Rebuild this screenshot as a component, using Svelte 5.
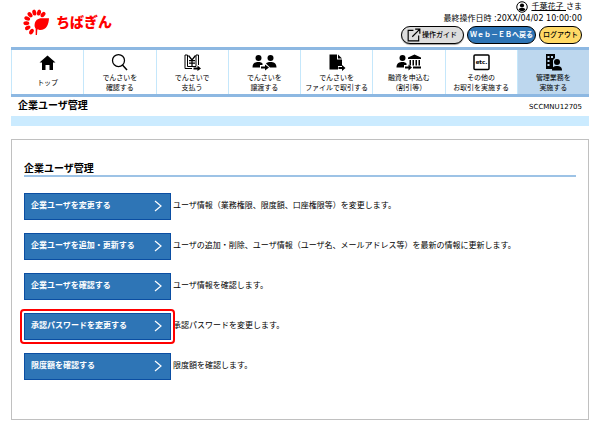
<script>
    const userName = "千葉花子";
    const lastOperation = "20XX/04/02 10:00:00";
    const screenId = "SCCMNU12705";

    const navItems = [
        { icon: "home", lines: ["トップ"] },
        { icon: "search", lines: ["でんさいを", "確認する"] },
        { icon: "pay", lines: ["でんさいで", "支払う"] },
        { icon: "transfer", lines: ["でんさいを", "譲渡する"] },
        { icon: "file", lines: ["でんさいを", "ファイルで取引する"] },
        { icon: "loan", lines: ["融資を申込む", "（割引等）"] },
        { icon: "etc", lines: ["その他の", "お取引を実施する"] },
        { icon: "admin", lines: ["管理業務を", "実施する"] },
    ];

    const menuItems = [
        { label: "企業ユーザを変更する", text: "ユーザ情報（業務権限、限度額、口座権限等）を変更します。" },
        { label: "企業ユーザを追加・更新する", text: "ユーザの追加・削除、ユーザ情報（ユーザ名、メールアドレス等）を最新の情報に更新します。" },
        { label: "企業ユーザを確認する", text: "ユーザ情報を確認します。" },
        { label: "承認パスワードを変更する", text: "承認パスワードを変更します。" },
        { label: "限度額を確認する", text: "限度額を確認します。" },
    ];

    const petals = [38, 13, -13, -40, -66, -93, -120, -150];

    let current = $state(7);
    let marked = $state(3);
</script>

<div class="page">
    <header class="header">
        <a class="logo" href="#top">
            <svg viewBox="0 0 78 78" width="26" height="26" aria-hidden="true">
                {#each petals as angle}
                    <ellipse cx="41" cy="10" rx="6" ry="9" transform="rotate({angle} 41 41)" />
                {/each}
                <path d="M35 46C36 34 46 27 58 28L78 28C77 48 70 64 50 63C47 63 44 62 43 61L42 78H38L38 59C35 55 34 50 35 46Z" />
            </svg>
            <span>ちばぎん</span>
        </a>

        <div class="account">
            <p class="user">
                <svg viewBox="0 0 24 24" width="12" height="12" aria-hidden="true">
                    <circle cx="12" cy="12" r="10.5" fill="#fff" stroke="#000" stroke-width="2" />
                    <circle cx="12" cy="9" r="4.2" />
                    <path d="M5 17C6 14 9 14 12 14S18 14 19 17C16 21 8 21 5 17Z" />
                </svg>
                <span><a href="#user">{userName}&nbsp;</a>さま</span>
            </p>
            <p class="last">最終操作日時 :{lastOperation}</p>
            <div class="tools">
                <button type="button" class="tool guide">
                    <svg viewBox="0 0 24 24" width="14" height="14" aria-hidden="true">
                        <path d="M11 4H2V22H20V13M14 2H22V10M22 2L9 15" fill="none" stroke="#000" stroke-width="2" />
                    </svg>
                    操作ガイド
                </button>
                <button type="button" class="tool back">Ｗｅｂ－ＥＢへ戻る</button>
                <button type="button" class="tool logout">ログアウト</button>
            </div>
        </div>
    </header>

    <nav class="nav">
        {#each navItems as item, i}
            <button type="button" class="nav-item" class:current={i === current} onclick={() => (current = i)}>
                <svg class="icon" viewBox="0 0 54 36" width="27" height="18" aria-hidden="true">
                    {#if item.icon === "home"}
                        <path d="M27 5L43 19H38V34H31V24H23V34H16V19H11Z" />
                    {:else if item.icon === "search"}
                        <circle cx="25" cy="15" r="12" fill="none" stroke="#000" stroke-width="2.5" />
                        <path d="M33 24L42 34" fill="none" stroke="#000" stroke-width="3" />
                    {:else if item.icon === "pay"}
                        <path d="M26 31H12V4H17M34 4H39V24M17 4V27H34V4" fill="none" stroke="#000" stroke-width="2" />
                        <path d="M19 5L26 14L33 5M26 14V26M20 15H32M20 20H32" fill="none" stroke="#000" stroke-width="2.5" />
                        <path d="M29 29H37V25L44 31L37 36V33H29Z" />
                    {:else if item.icon === "transfer"}
                        <circle cx="15" cy="10" r="6" />
                        <circle cx="39" cy="10" r="6" />
                        <path d="M3 29C3 20 9 18 15 18C19 18 21 19 23 21V24H18V29ZM51 29C51 20 45 18 39 18C34 18 32 19 30 21L38 29Z" />
                        <path d="M20 27H28V23L36 29L28 35V31H20Z" />
                    {:else if item.icon === "file"}
                        <path d="M13 3H28V13H38V26H30V33H13ZM30 3L38 11H30Z" />
                        <path d="M31 28H38V24L45 30L38 36V32H31Z" />
                    {:else if item.icon === "loan"}
                        <circle cx="15" cy="10" r="6" />
                        <path d="M3 29C3 20 9 18 15 18C19 18 21 19 23 21V24H18V29Z" />
                        <path d="M20 27H27V23L34 29L27 35V31H20Z" />
                        <path d="M26 12V9L39 3L52 9V12ZM29 14H32V25H29ZM35 14H38V25H35ZM41 14H44V25H41ZM47 14H50V25H47ZM36 27H52V31H36Z" />
                    {:else if item.icon === "etc"}
                        <rect x="12" y="4" width="30" height="29" rx="2" fill="#fff" stroke="#000" stroke-width="3" />
                        <text x="27" y="22" text-anchor="middle">etc.</text>
                    {:else}
                        <path fill-rule="evenodd" d="M12 2H30V10L26 14V32H12ZM15 6V10H19V6ZM22 6V10H26V6ZM15 14V18H19V14ZM15 22V26H19V22Z" />
                        <circle cx="34" cy="18" r="6" />
                        <path d="M24 35C24 28 28 26 34 26S44 28 44 35Z" />
                    {/if}
                </svg>
                <span class="nav-label">
                    {#each item.lines as line}
                        <span>{line}</span>
                    {/each}
                </span>
            </button>
        {/each}
    </nav>

    <div class="title-row">
        <h1>企業ユーザ管理</h1>
        <span class="screen-id">{screenId}</span>
    </div>
    <div class="band"></div>

    <main class="panel">
        <h2>企業ユーザ管理</h2>
        <ul class="menu">
            {#each menuItems as item, i}
                <li>
                    <button type="button" class="menu-button" class:marked={i === marked} onclick={() => (marked = i)}>
                        <span>{item.label}</span>
                        <svg viewBox="0 0 8 12" width="8" height="12" aria-hidden="true">
                            <path d="M1 1L7 6L1 11" fill="none" stroke="#fff" stroke-width="1.2" />
                        </svg>
                    </button>
                    <span class="description">{item.text}</span>
                </li>
            {/each}
        </ul>
    </main>
</div>

<style>
    :global(body) {
        margin: 0;
        background: #fff;
    }

    .page {
        padding: 0 11px 12px;
        color: #000;
        font-family: "DejaVu Sans", "Noto Sans CJK JP", sans-serif;
        font-size: 8px;
        line-height: 12px;
    }

    button {
        margin: 0;
        font-family: inherit;
        cursor: pointer;
    }

    p, h1, h2 {
        margin: 0;
    }

    .header {
        display: flex;
        justify-content: space-between;
        height: 47px;
    }

    .logo {
        display: flex;
        align-items: center;
        align-self: flex-start;
        gap: 7px;
        padding: 9px 0 0 12px;
        color: #f00;
        font-size: 14px;
        font-weight: 900;
        line-height: 26px;
        text-decoration: none;
    }

    .logo svg {
        fill: #f00;
    }

    .account {
        display: flex;
        flex-direction: column;
        align-items: flex-end;
        padding: 1px 7px 0 0;
    }

    .user {
        display: flex;
        align-items: center;
        gap: 3px;
    }

    .user a {
        color: inherit;
    }

    .tools {
        display: flex;
        gap: 3px;
        margin-top: 1px;
    }

    .tool {
        display: flex;
        align-items: center;
        justify-content: center;
        gap: 1px;
        height: 18px;
        padding: 0 2px;
        border: 1px solid #000;
        border-radius: 9px;
        font-size: 7px;
        font-weight: 500;
        line-height: 10px;
        white-space: nowrap;
    }

    .guide {
        padding: 0 6px 0 5px;
        background: #ddd;
        box-shadow: 0 1px 1px #999;
        color: #000;
    }

    .back {
        background: #2e75b6;
        color: #fff;
        font-weight: 700;
    }

    .logout {
        padding: 0 3px;
        background: #ffd966;
        color: #000;
    }

    .nav {
        display: grid;
        grid-template-columns: repeat(8, 1fr);
        height: 44px;
        border-top: 3px solid #8db8e2;
        border-bottom: 3px solid #8db8e2;
    }

    .nav-item {
        display: flex;
        flex-direction: column;
        align-items: center;
        padding: 3px 0 0;
        border: 0;
        border-left: 1px solid #c5e7fb;
        background: #fff;
        color: #000;
        font-size: 7px;
        line-height: 10px;
        white-space: nowrap;
    }

    .nav-item.current {
        background: #bdd7ee;
    }

    .icon {
        flex: none;
    }

    .icon text {
        font-size: 11px;
        font-weight: 700;
    }

    .nav-label {
        display: flex;
        flex: 1;
        flex-direction: column;
        align-items: center;
        justify-content: center;
    }

    .title-row {
        display: flex;
        align-items: center;
        justify-content: space-between;
        height: 19px;
        padding: 0 7px;
    }

    .screen-id {
        font-size: 7px;
    }

    h1, h2 {
        font-size: 10px;
        font-weight: 700;
        line-height: 12px;
    }

    h1 {
        padding-bottom: 2px;
    }

    .band {
        height: 10px;
        background: #cbebff;
    }

    .panel {
        margin-top: 13px;
        padding: 23px 12px 39px;
        border: 1px solid #c0c0c0;
    }

    h2 {
        border-bottom: 2px solid #9dc3e6;
    }

    .menu {
        display: flex;
        flex-direction: column;
        gap: 13px;
        margin: 16px 0 0;
        padding: 0;
        list-style: none;
    }

    .menu li {
        display: flex;
        align-items: center;
        gap: 2px;
    }

    .description {
        padding-bottom: 2px;
    }

    .menu-button {
        position: relative;
        display: flex;
        flex: none;
        align-items: center;
        justify-content: space-between;
        width: 147px;
        height: 27px;
        padding: 0 8px 2px 6px;
        border: 1px solid #0b4ea2;
        background: #2e75b6;
        color: #fff;
        font-size: 8px;
        font-weight: 700;
        line-height: 12px;
    }

    .menu-button.marked::after {
        content: "";
        position: absolute;
        inset: -5px;
        border: 2px solid #f00;
        border-radius: 4px;
    }
</style>
